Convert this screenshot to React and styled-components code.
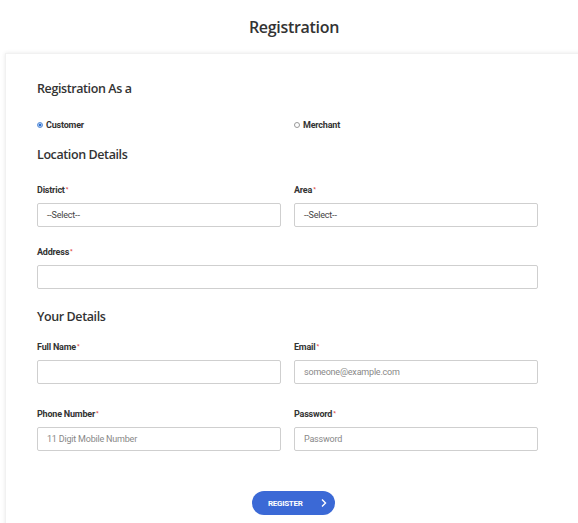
import React from "react";
import styled, { createGlobalStyle } from "styled-components";

const Global = createGlobalStyle`
  html, body { margin: 0; padding: 0; background: #fff; overflow: hidden; }
  body { font-family: "Liberation Sans Narrow", "Roboto", "Noto Sans", sans-serif; color: #333; }
  * { box-sizing: border-box; }
`;

const Page = styled.div`
  width: 578px;
  height: 523px;
  overflow: hidden;
`;

const Title = styled.h1`
  margin: 0;
  height: 53px;
  display: flex;
  align-items: center;
  justify-content: center;
  padding: 1px 0 0 10px;
  font-family: "Open Sans", "Noto Sans", sans-serif;
  font-size: 16px;
  font-weight: 600;
  color: #333;
  letter-spacing: -0.3px;
`;

const Card = styled.div`
  margin-left: 5px;
  width: 600px;
  background: #fff;
  box-shadow: 0 0 4px rgba(0, 0, 0, 0.09);
  border-top: 1px solid #f1f1f1;
  border-left: 1px solid #f1f1f1;
  padding: 26px 0 40px 31px;
  min-height: 480px;
`;

const Content = styled.div`
  width: 501px;
`;

const Heading = styled.h2`
  margin: ${(p) => p.$mt || 0}px 0 0;
  font-family: "Open Sans", "Noto Sans", sans-serif;
  font-size: 12.5px;
  line-height: 18px;
  font-weight: 600;
  color: #333;
  letter-spacing: -0.4px;
`;

const Row = styled.div`
  display: grid;
  grid-template-columns: ${(p) => (p.$full ? "501px" : "244px 244px")};
  column-gap: 13px;
  margin-top: ${(p) => p.$mt || 0}px;
`;

const RadioLabel = styled.label`
  display: flex;
  align-items: center;
  gap: 3px;
  height: 12px;
  font-size: 9px;
  font-weight: 700;
  color: #333;
  letter-spacing: -0.2px;
`;

const RadioDot = styled.span`
  width: 6px;
  height: 6px;
  border-radius: 50%;
  border: 1px solid ${(p) => (p.$on ? "#5b8fd8" : "#999")};
  background: ${(p) => (p.$on ? "radial-gradient(circle, #2c6fd1 45%, #a8c6ee 55%)" : "#fff")};
`;

const Field = styled.div`
  display: flex;
  flex-direction: column;
  gap: 7px;
`;

const Label = styled.label`
  font-size: 9px;
  line-height: 12px;
  font-weight: 700;
  color: #333;
  letter-spacing: -0.2px;
  sup {
    color: #e0403a;
    font-size: 6px;
    vertical-align: top;
    position: relative;
    top: -1px;
    margin-left: 1px;
  }
`;

const Input = styled.div`
  height: 24px;
  border: 1px solid #cfcfcf;
  border-radius: 2px;
  padding: 0 9px;
  display: flex;
  align-items: center;
  font-size: 9px;
  letter-spacing: -0.2px;
  color: ${(p) => (p.$dark ? "#444" : "#888")};
`;

const ButtonRow = styled.div`
  display: flex;
  justify-content: center;
  margin-top: 40px;
  padding-left: 12px;
`;

const Button = styled.button`
  width: 83px;
  height: 24px;
  border: none;
  border-radius: 12px;
  background: #3b69d6;
  color: #fff;
  font-family: inherit;
  font-size: 8px;
  font-weight: 700;
  display: flex;
  align-items: center;
  padding: 0 0 0 16px;
  gap: 17px;
  letter-spacing: -0.3px;
`;

function F({ label, value, dark }) {
  return (
    <Field>
      <Label>
        {label}
        <sup>*</sup>
      </Label>
      <Input $dark={dark}>{value}</Input>
    </Field>
  );
}

export default function App() {
  return (
    <Page>
      <Global />
      <Title>Registration</Title>
      <Card>
        <Content>
          <Heading>Registration As a</Heading>
          <Row $mt={21}>
            <RadioLabel>
              <RadioDot $on />
              Customer
            </RadioLabel>
            <RadioLabel>
              <RadioDot />
              Merchant
            </RadioLabel>
          </Row>
          <Heading $mt={15}>Location Details</Heading>
          <Row $mt={20}>
            <F label="District" value="--Select--" dark />
            <F label="Area" value="--Select--" dark />
          </Row>
          <Row $mt={19} $full>
            <F label="Address" value="" />
          </Row>
          <Heading $mt={19}>Your Details</Heading>
          <Row $mt={15}>
            <F label="Full Name" value="" />
            <F label="Email" value="someone@example.com" />
          </Row>
          <Row $mt={24}>
            <F label="Phone Number" value="11 Digit Mobile Number" />
            <F label="Password" value="Password" />
          </Row>
          <ButtonRow>
            <Button>
              REGISTER
              <svg width="8" height="10" viewBox="0 0 8 10">
                <path d="M2 1.5 L5.5 5 L2 8.5" stroke="#fff" strokeWidth="1.4" fill="none" />
              </svg>
            </Button>
          </ButtonRow>
        </Content>
      </Card>
    </Page>
  );
}
